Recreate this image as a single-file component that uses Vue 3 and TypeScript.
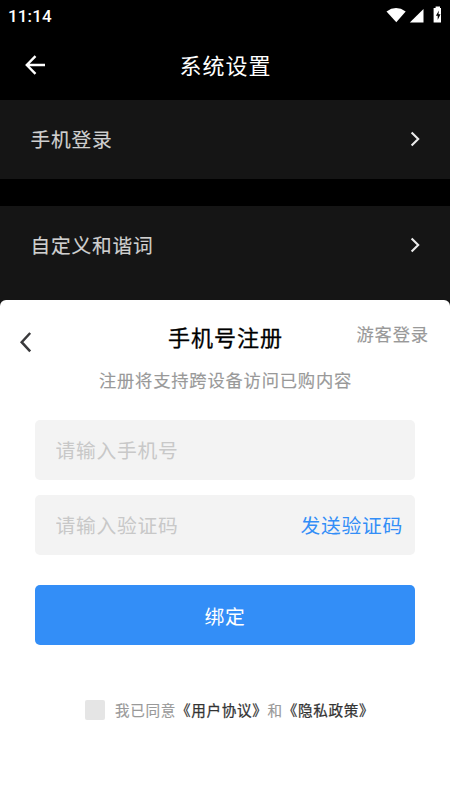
<script setup lang="ts">
const settings: string[] = ['手机登录', '自定义和谐词']
</script>

<template>
  <main class="screen">
    <header class="status">
      <span class="time">11:14</span>
      <svg class="status-icons" width="60" height="20" viewBox="0 0 60 20" fill="#fff">
        <path d="M5.5 6.4Q15 -.3 24.7 6.4L15.3 17.3Z" />
        <path d="M42.5 4V17.5H28.8Z" />
        <path d="M54.6 1.5h4.4v1.4h2.2v14.6h-8.6V2.9h2Z" />
        <path d="M57.9 5.5l-3 5.2h1.8v4.2l2.8-5.6h-2Z" fill="#000" />
      </svg>
    </header>
    <nav class="topbar">
      <svg class="back" width="24" height="24" viewBox="0 0 24 24" fill="none" stroke="#fff" stroke-width="2.4">
        <path d="M22 12H3.9M12.5 3.2L3.8 12l8.7 8.8" />
      </svg>
      <h1>系统设置</h1>
    </nav>
    <section class="settings">
      <div v-for="item in settings" :key="item" class="row">
        <span>{{ item }}</span>
        <svg width="12" height="18" viewBox="0 0 12 18" fill="none" stroke="#ececec" stroke-width="2.1">
          <path d="M2.6 2.4L9.2 9l-6.6 6.6" />
        </svg>
      </div>
    </section>
    <section class="sheet">
      <div class="sheet-head">
        <svg class="sheet-back" width="14" height="22" viewBox="0 0 14 22" fill="none" stroke="#3a3a3c" stroke-width="2.5">
          <path d="M12.2 2L3.7 11.2l8.5 9.2" />
        </svg>
        <h2>手机号注册</h2>
        <button class="guest" type="button">游客登录</button>
      </div>
      <p class="hint">注册将支持跨设备访问已购内容</p>
      <form class="form" @submit.prevent>
        <div class="field"><input type="tel" placeholder="请输入手机号" /></div>
        <div class="field">
          <input type="text" placeholder="请输入验证码" />
          <button class="send" type="button">发送验证码</button>
        </div>
        <button class="submit" type="submit">绑定</button>
      </form>
      <div class="agree">
        <span class="check"></span>
        <span class="terms">我已同意<b>《用户协议》</b>和<b>《隐私政策》</b></span>
      </div>
    </section>
  </main>
</template>

<style>
body {
  background: #000;
}
</style>

<style scoped>
* {
  box-sizing: border-box;
}
.screen {
  width: 450px;
  height: 800px;
  overflow: hidden;
  display: flex;
  flex-direction: column;
  background: #000;
  color: #fff;
  font-family: 'Noto Sans CJK SC', sans-serif;
}
button,
input {
  border: 0;
  padding: 0;
  margin: 0;
  background: none;
  font: inherit;
  outline: none;
}
h1,
h2,
p {
  margin: 0;
}
.status {
  height: 30px;
  flex: none;
  display: flex;
  justify-content: space-between;
  padding: 5px 9px 0 8px;
}
.time {
  font: 500 17px/22px Roboto, sans-serif;
  letter-spacing: 0.15px;
}
.topbar {
  height: 70px;
  flex: none;
  display: grid;
  grid-template-columns: 60px 1fr 60px;
  align-items: center;
}
.back {
  margin-left: 22.5px;
}
h1 {
  padding: 0 0 2px 1px;
  text-align: center;
  font-size: 22px;
  line-height: 32px;
  font-weight: 400;
  letter-spacing: 1px;
}
.settings {
  flex: none;
  height: 210px;
  display: flex;
  flex-direction: column;
  gap: 27px;
}
.row {
  height: 79px;
  flex: none;
  display: flex;
  align-items: center;
  justify-content: space-between;
  padding: 0 29px 1px 30.5px;
  background: #151515;
  color: #d0d0d0;
  font-size: 19.7px;
  letter-spacing: 0.8px;
  -webkit-text-stroke: 0.15px;
}
.row span {
  padding-bottom: 1px;
}
.row:last-child {
  height: 104px;
  padding-bottom: 26px;
}
.sheet {
  position: relative;
  height: 500px;
  margin-top: -10px;
  flex: none;
  background: #fff;
  border-radius: 6px 6px 0 0;
}
.sheet-head {
  height: 66px;
  display: grid;
  grid-template-columns: 110px 1fr 110px;
  padding-top: 18px;
}
.sheet-back {
  margin: 13px 0 0 18px;
}
h2 {
  margin-top: -2px;
  padding-left: 1px;
  text-align: center;
  color: #000;
  font-size: 22px;
  line-height: 40px;
  font-weight: 400;
  -webkit-text-stroke: 0.3px;
  letter-spacing: 1px;
}
.guest {
  height: 31px;
  padding-left: 16.5px;
  text-align: left;
  color: #999;
  font-size: 17.3px;
  letter-spacing: 0.8px;
  -webkit-text-stroke: 0.15px;
}
.hint {
  padding-left: 1px;
  text-align: center;
  color: #999;
  font-size: 17.3px;
  line-height: 28px;
  letter-spacing: 0.8px;
  -webkit-text-stroke: 0.15px;
}
.form {
  padding: 26px 35px 0;
  display: flex;
  flex-direction: column;
}
.field {
  height: 60px;
  margin-bottom: 15px;
  border-radius: 5px;
  background: #f3f3f3;
  display: flex;
  align-items: center;
  padding: 0 12px 2px 20.5px;
  font-size: 19.8px;
  letter-spacing: 0.7px;
}
input {
  flex: 1;
  min-width: 0;
  letter-spacing: inherit;
}
input::placeholder {
  color: #c8c8c8;
  opacity: 1;
}
.send {
  color: #338ef7;
  letter-spacing: 0.7px;
}
.submit {
  height: 60px;
  margin-top: 15px;
  padding-top: 1px;
  border-radius: 5px;
  background: #338ef7;
  color: #fff;
  font-size: 19.8px;
  letter-spacing: 0.7px;
}
.agree {
  margin-top: 55px;
  padding-left: 85px;
  display: flex;
  align-items: center;
  height: 20px;
}
.check {
  width: 20px;
  height: 20px;
  border-radius: 2px;
  background: #e5e5e5;
}
.terms {
  margin-left: 10px;
  color: #999;
  font-size: 14.6px;
  line-height: 20px;
  letter-spacing: 0.65px;
  -webkit-text-stroke: 0.15px;
}
b {
  color: #333;
  font-weight: 400;
  -webkit-text-stroke: 0.25px;
}
</style>
